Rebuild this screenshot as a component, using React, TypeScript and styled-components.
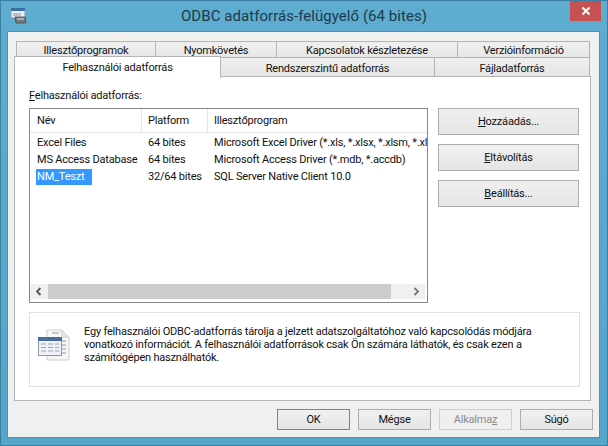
import React from "react";
import styled, { createGlobalStyle } from "styled-components";

const Global = createGlobalStyle`
  html, body { margin: 0; padding: 0; background: #5aa8cc; }
  * { box-sizing: border-box; }
`;

const Frame = styled.div`
  width: 608px; height: 446px; overflow: hidden;
  background: linear-gradient(#5eaccf, #56a5ca);
  border: 1px solid #3a7f9f;
  display: flex; flex-direction: column;
  font-family: "Roboto", "Liberation Sans", sans-serif;
  font-size: 11px; letter-spacing: -0.2px; color: #111;
`;
const TitleBar = styled.div`
  height: 30px; display: grid; grid-template-columns: 1fr auto 1fr; align-items: start;
`;
const AppIcon = styled.svg`margin: 7px 0 0 9px; display: block;`;
const Title = styled.div`
  font-size: 15px; line-height: 20px; margin-top: 5px; color: #1c3a4a; letter-spacing: 0.05px; white-space: nowrap;
`;
const CloseButton = styled.div`
  justify-self: end; width: 31px; height: 20px; margin-right: 6px; background: #c75050;
  display: flex; align-items: center; justify-content: center;
`;
const Client = styled.div`
  flex: 1; margin: 0 7px 7px 6px; padding-top: 9px; background: #f0f0f0;
  display: flex; flex-direction: column; border: 1px solid #4a93b6;
`;
const TabRow = styled.div<{ $indent: number }>`
  display: flex; margin-left: ${p => p.$indent}px; margin-right: 8px; align-items: flex-end;
`;
const Tab = styled.div<{ $w: number; $active?: boolean; $overlap?: boolean }>`
  width: ${p => p.$w}px; height: ${p => (p.$active ? 22 : 20)}px;
  margin-bottom: ${p => (p.$active ? -1 : 0)}px;
  margin-left: ${p => (p.$overlap ? -1 : 0)}px;
  border: 1px solid #b4b4b4; border-bottom: ${p => (p.$active ? "none" : "1px solid #b4b4b4")};
  background: ${p => (p.$active ? "#fff" : "linear-gradient(#f0f0f0, #e5e5e5)")};
  text-align: center; line-height: 21px; white-space: nowrap;
  position: relative; z-index: ${p => (p.$active ? 2 : 1)};
`;
const TopTab = styled(Tab)`height: 20px; margin-bottom: -5px; line-height: 17px; z-index: 0;`;
const Panel = styled.div`
  margin: -1px 8px 0 6px; height: 325px; background: #fff; border: 1px solid #b4b4b4;
  padding: 11px 11px 0 14px; position: relative; z-index: 1;
`;
const Underlined = styled.span`text-decoration: underline; text-underline-offset: 1px;`;
const ListLabel = styled.div`line-height: 15px; height: 16px; margin-bottom: 4px;`;
const Content = styled.div`display: flex; gap: 10px;`;
const ListView = styled.div`
  width: 399px; height: 195px; border: 1px solid #828790; background: #fff;
  display: flex; flex-direction: column;
`;
const Columns = "grid-template-columns: 112px 66px 1fr;";
const ListHeader = styled.div`
  display: grid; ${Columns} height: 24px; border-bottom: 1px solid #e5e5e5; flex: none;
`;
const HeaderCell = styled.div`
  padding-left: 6px; line-height: 23px; border-right: 1px solid #e5e5e5;
  &:first-child { padding-left: 7px; }
  &:last-child { border-right: none; }
`;
const Rows = styled.div`flex: 1; padding-top: 1px; overflow: hidden;`;
const Row = styled.div`display: grid; ${Columns} height: 17px; line-height: 17px;`;
const Cell = styled.div`
  padding-left: 6px; white-space: nowrap; overflow: hidden;
  &:first-child { padding-left: 7px; }
`;
const Selected = styled.span`
  display: inline-block; width: 56px; height: 16px; line-height: 15px; padding-left: 1px; margin-left: -1px;
  background: #3399ff; color: #fff;
`;
const HScroll = styled.div`
  height: 15px; margin: 0 2px 3px 0; display: flex; background: #f0f0f0; flex: none;
`;
const ScrollBtn = styled.div`
  width: 18px; display: flex; align-items: center; justify-content: center; flex: none;
`;
const ScrollThumb = styled.div`width: 343px; background: #cdcdcd;`;
const ScrollFill = styled.div`flex: 1;`;
const SideButtons = styled.div`display: flex; flex-direction: column; gap: 9px;`;
const Button = styled.div<{ $w: number; $h: number; $primary?: boolean; $disabled?: boolean }>`
  width: ${p => p.$w}px; height: ${p => p.$h}px; flex: none;
  border: 1px solid ${p => (p.$primary ? "#3399dd" : p.$disabled ? "#d0d0d0" : "#acacac")};
  background: ${p => (p.$disabled ? "#efefef" : "linear-gradient(#f0f0f0, #e5e5e5)")};
  color: ${p => (p.$disabled ? "#8a8a8a" : "#111")};
  display: flex; align-items: center; justify-content: center; white-space: nowrap;
`;
const InfoBox = styled.div`
  width: 551px; height: 75px; margin-top: 9px; border: 1px solid #e1e1e1;
  display: flex; align-items: flex-start; padding: 12px 0 0 8px;
`;
const InfoIcon = styled.svg`flex: none; margin: 4px 13px 0 0; display: block;`;
const InfoText = styled.div`line-height: 13px; width: 470px; white-space: nowrap;`;
const Footer = styled.div`
  display: flex; justify-content: flex-end; gap: 8px; margin: 8px 6px 0 0;
`;

const Chevron = ({ dir }: { dir: "l" | "r" }) => (
  <svg width="8" height="9" viewBox="0 0 8 9">
    <path d={dir === "l" ? "M5.5 1 L2 4.5 L5.5 8" : "M2.5 1 L6 4.5 L2.5 8"} fill="none" stroke={dir === "l" ? "#555" : "#777"} strokeWidth="1.8" />
  </svg>
);

export default function App() {
  return (
    <>
      <Global />
      <Frame>
        <TitleBar>
          <AppIcon width="17" height="16" viewBox="0 0 17 16">
            <rect x="1" y="0" width="14" height="10" fill="#e8eef4" stroke="#8a9fb3" />
            <rect x="1" y="0" width="14" height="3" fill="#3d6fa8" />
            <rect x="3" y="5" width="8" height="3" fill="#b8c4cf" />
            <path d="M5 9 H15 L16 15 H6 Z" fill="#6f7a80" stroke="#4e575c" />
            <rect x="7" y="10" width="7" height="2" fill="#a5afb5" />
          </AppIcon>
          <Title>ODBC adatforrás-felügyelő (64 bites)</Title>
          <CloseButton>
            <svg width="10" height="10" viewBox="0 0 10 10">
              <path d="M1.5 1.5 L8.5 8.5 M8.5 1.5 L1.5 8.5" stroke="#fff" strokeWidth="2" />
            </svg>
          </CloseButton>
        </TitleBar>
        <Client>
          <TabRow $indent={8}>
            <TopTab $w={140}>Illesztőprogramok</TopTab>
            <TopTab $w={122} $overlap>Nyomkövetés</TopTab>
            <TopTab $w={182} $overlap>Kapcsolatok készletezése</TopTab>
            <TopTab $w={133} $overlap>Verzióinformáció</TopTab>
          </TabRow>
          <TabRow $indent={6}>
            <Tab $w={207} $active>Felhasználói adatforrás</Tab>
            <Tab $w={215} $overlap>Rendszerszintű adatforrás</Tab>
            <Tab $w={156} $overlap>Fájladatforrás</Tab>
          </TabRow>
          <Panel>
            <ListLabel><Underlined>F</Underlined>elhasználói adatforrás:</ListLabel>
            <Content>
              <ListView>
                <ListHeader>
                  <HeaderCell>Név</HeaderCell>
                  <HeaderCell>Platform</HeaderCell>
                  <HeaderCell>Illesztőprogram</HeaderCell>
                </ListHeader>
                <Rows>
                  <Row><Cell>Excel Files</Cell><Cell>64 bites</Cell><Cell>Microsoft Excel Driver (*.xls, *.xlsx, *.xlsm, *.xlsb)</Cell></Row>
                  <Row><Cell>MS Access Database</Cell><Cell>64 bites</Cell><Cell>Microsoft Access Driver (*.mdb, *.accdb)</Cell></Row>
                  <Row><Cell><Selected>NM_Teszt</Selected></Cell><Cell>32/64 bites</Cell><Cell>SQL Server Native Client 10.0</Cell></Row>
                </Rows>
                <HScroll>
                  <ScrollBtn><Chevron dir="l" /></ScrollBtn>
                  <ScrollThumb />
                  <ScrollFill />
                  <ScrollBtn><Chevron dir="r" /></ScrollBtn>
                </HScroll>
              </ListView>
              <SideButtons>
                <Button $w={141} $h={27}><span><Underlined>H</Underlined>ozzáadás...</span></Button>
                <Button $w={141} $h={27}><span><Underlined>E</Underlined>ltávolítás</span></Button>
                <Button $w={141} $h={27}><span><Underlined>B</Underlined>eállítás...</span></Button>
              </SideButtons>
            </Content>
            <InfoBox>
              <InfoIcon width="33" height="34" viewBox="0 0 33 34">
                <path d="M9 1 H24 L31 8 V31 H9 Z" fill="#f6f6f6" stroke="#cfcfcf" />
                <path d="M24 1 V8 H31" fill="#e6e6e6" stroke="#cfcfcf" />
                <path d="M14 4 H21 M24 12 H28 M24 16 H28 M24 20 H28 M24 24 H28" stroke="#b8b8b8" strokeWidth="1.5" />
                <rect x="0.5" y="8.5" width="23" height="18" fill="#eef2f7" stroke="#8c98a8" />
                <rect x="0" y="8" width="24" height="4" fill="#4a6c9a" />
                <path d="M3 15 H8 M10 15 H15 M17 15 H21 M3 18.5 H8 M10 18.5 H15 M17 18.5 H21 M3 22 H8 M10 22 H15 M17 22 H21" stroke="#9aa7b8" strokeWidth="1.2" />
              </InfoIcon>
              <InfoText>
                Egy felhasználói ODBC-adatforrás tárolja a jelzett adatszolgáltatóhoz való kapcsolódás módjára<br />
                vonatkozó információt. A felhasználói adatforrások csak Ön számára láthatók, és csak ezen a<br />
                számítógépen használhatók.
              </InfoText>
            </InfoBox>
          </Panel>
          <Footer>
            <Button $w={73} $h={21} $primary>OK</Button>
            <Button $w={73} $h={21}>Mégse</Button>
            <Button $w={73} $h={21} $disabled><span>Alkalma<Underlined>z</Underlined></span></Button>
            <Button $w={73} $h={21}>Súgó</Button>
          </Footer>
        </Client>
      </Frame>
    </>
  );
}
